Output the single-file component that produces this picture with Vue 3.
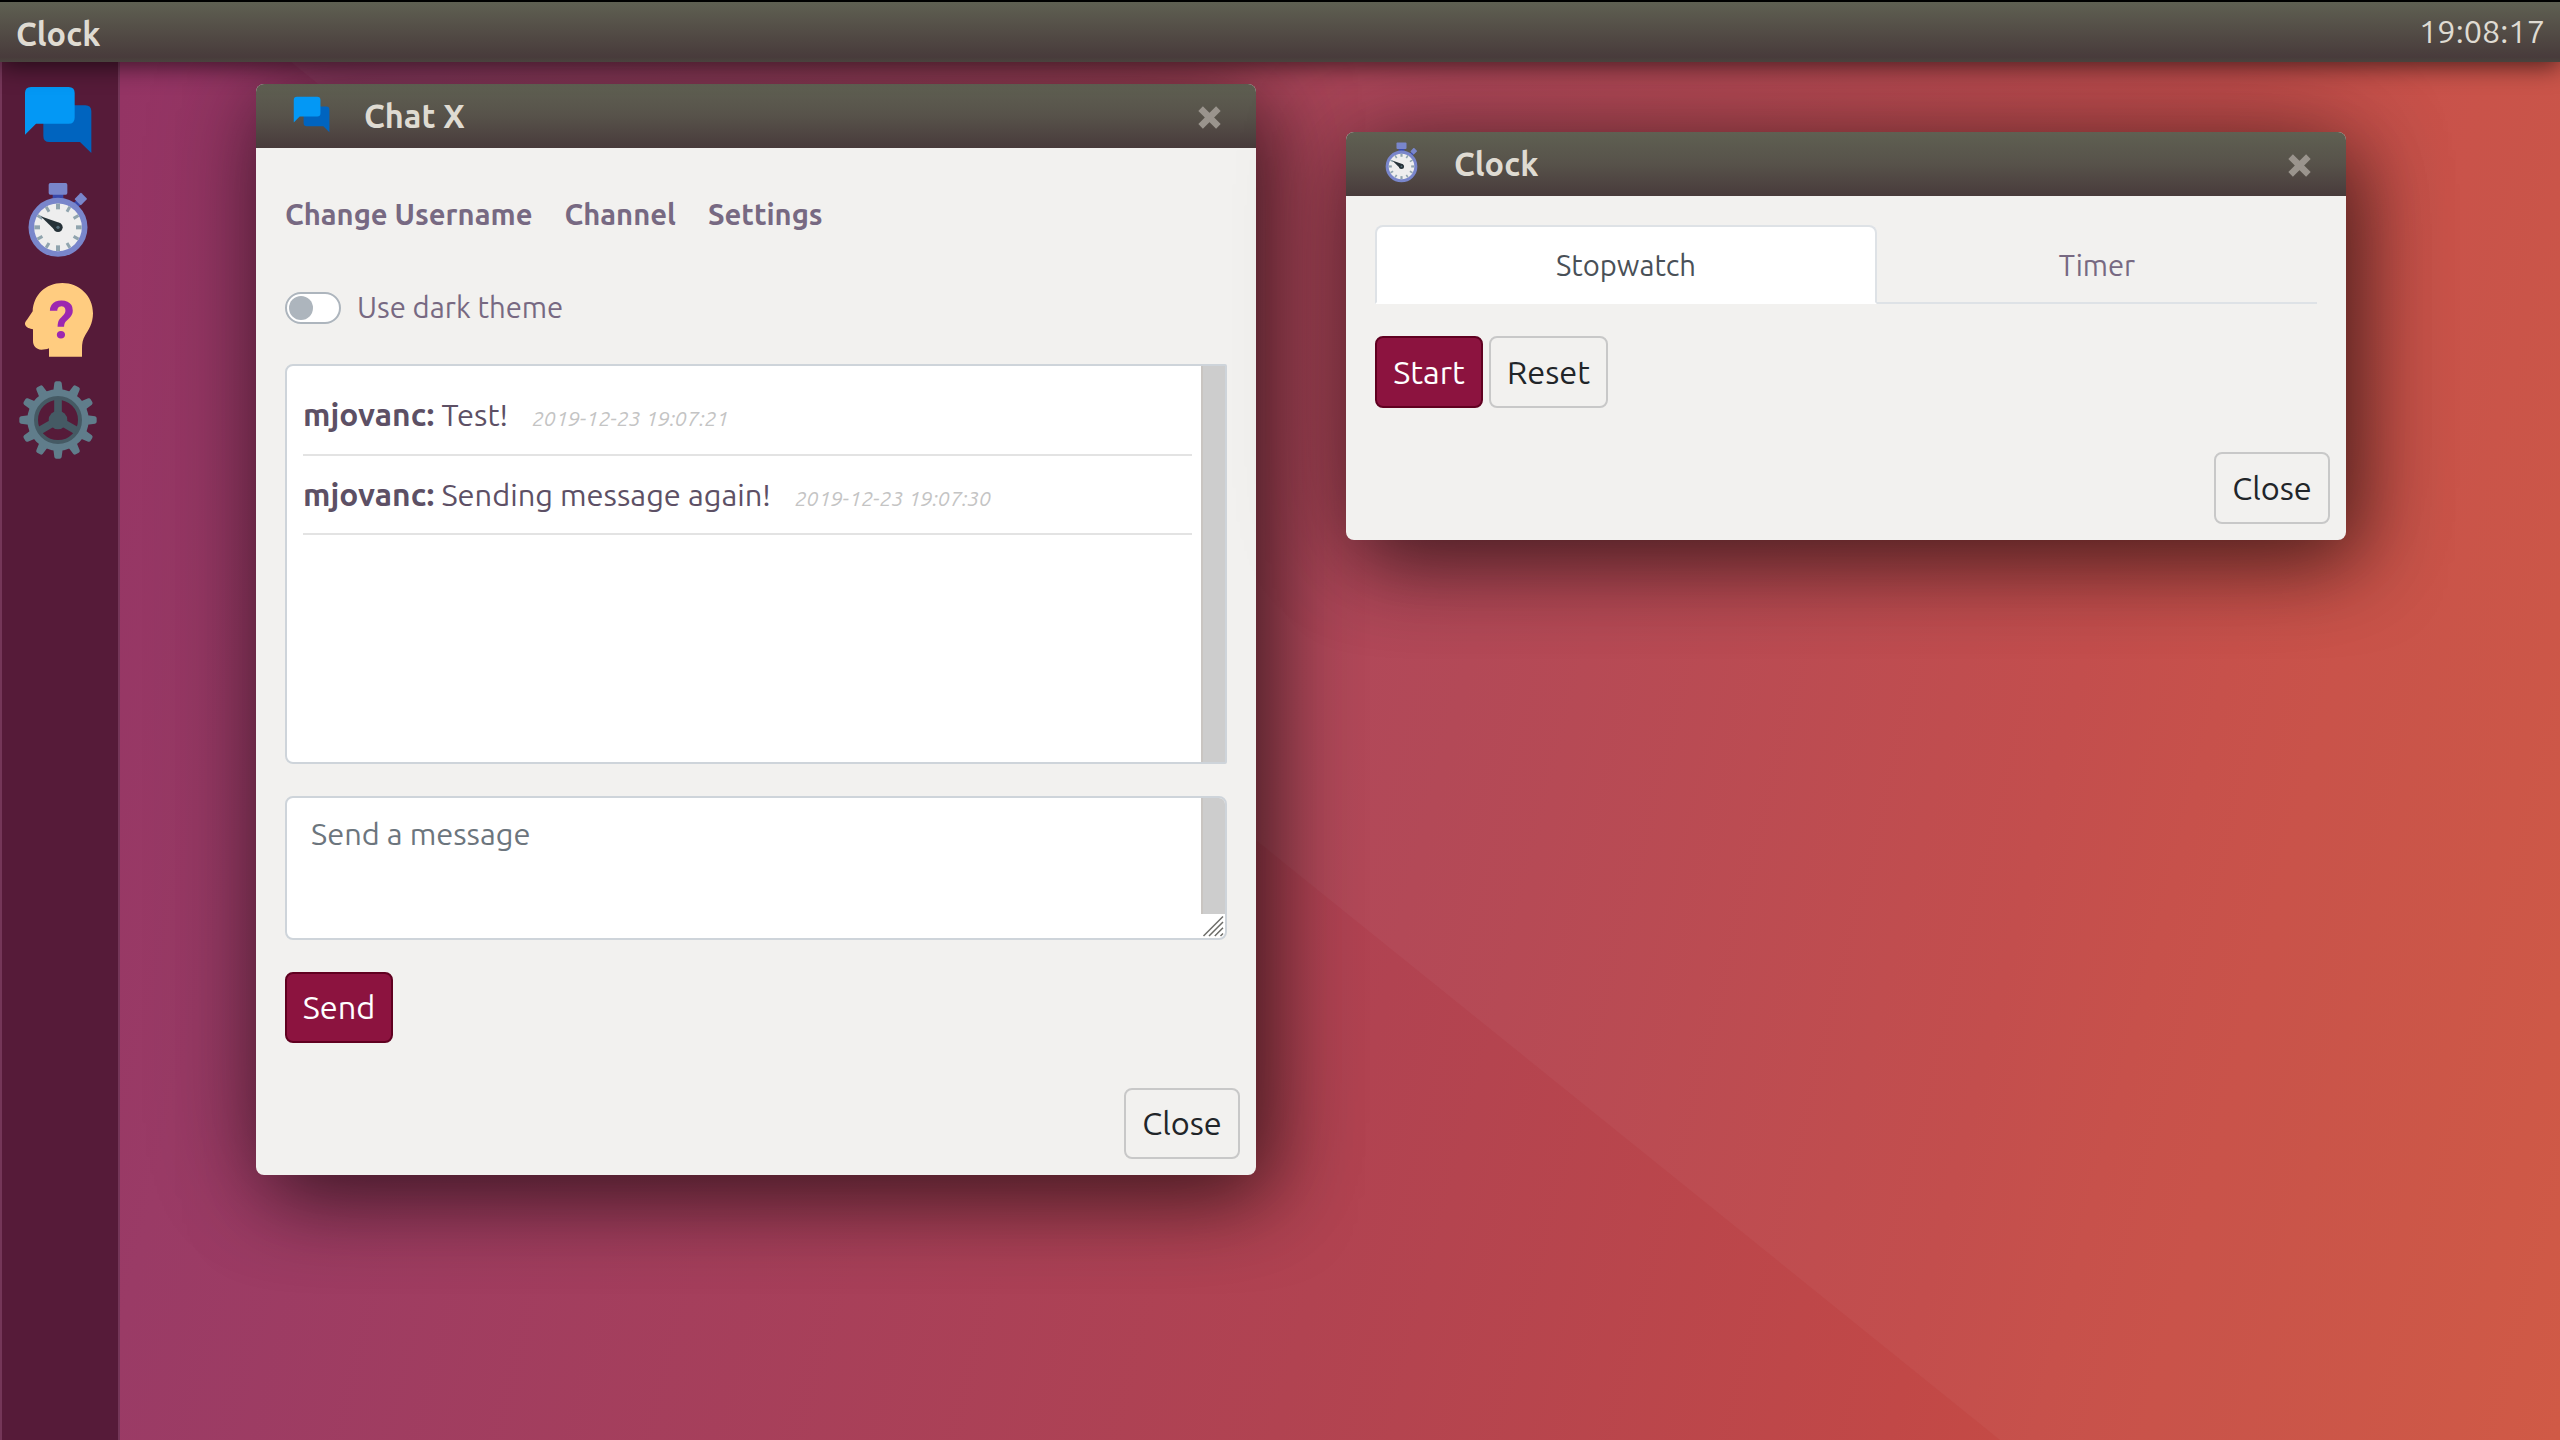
<script setup>
import { ref } from 'vue'

const activeApp = ref('Clock')
const time = ref('19:08:17')
const messages = [
  { user: 'mjovanc:', text: 'Test!', at: '2019-12-23 19:07:21' },
  { user: 'mjovanc:', text: 'Sending message again!', at: '2019-12-23 19:07:30' },
]
const twelfths = Array.from({ length: 12 }, (_, i) => i * 30)
</script>

<template>
  <div class="desktop">
    <!-- icon shapes shared by the dock and the title bars -->
    <svg class="defs" aria-hidden="true">
      <symbol id="chat" viewBox="54 240 240 240">
        <path fill="#0064bf" d="M148 316H256Q274 316 274 334V459L240 426H148Q130 426 130 408V334Q130 316 148 316Z" />
        <path fill="#0398f5" d="M93 261H206Q224 261 224 279V353Q224 371 206 371H108L75 404V279Q75 261 93 261Z" />
      </symbol>
      <symbol id="watch" viewBox="54 540 240 240">
        <rect x="158" y="580" width="32" height="20" fill="#3949ab" />
        <path d="M226 617L240 603" stroke="#3949ab" stroke-width="18" />
        <rect x="146" y="549" width="56" height="35" rx="5" fill="#7986cb" />
        <rect x="229" y="583" width="27" height="28" rx="3" transform="rotate(45 242.500 597)" fill="#7986cb" />
        <circle cx="174" cy="682" r="80" fill="#eeeeee" stroke="#7986cb" stroke-width="17" />
        <g fill="#90a4ae">
          <rect v-for="a in twelfths" :key="a" :x="a % 90 ? 169.5 : 168" y="611" :width="a % 90 ? 9 : 12" height="17" :transform="`rotate(${a} 174 682)`" />
        </g>
        <path d="M122 649L182 670L168 694Z" fill="#263238" />
        <circle cx="174" cy="682" r="14" fill="#263238" />
        <circle cx="174" cy="682" r="5" fill="#546e7a" />
      </symbol>
    </svg>

    <header class="topbar">
      <strong class="app-name">{{ activeApp }}</strong>
      <span class="time">{{ time }}</span>
    </header>

    <main class="workspace">
      <svg class="facet" viewBox="0 0 2560 1378" preserveAspectRatio="none">
        <path d="M291 0L2000 1378H2560V0Z" fill="#fff" fill-opacity=".035" />
      </svg>

      <aside class="dock">
        <svg class="dock-icon"><use href="#chat" /></svg>
        <svg class="dock-icon"><use href="#watch" /></svg>
        <svg class="dock-icon" viewBox="54 840 240 240">
          <path fill="#ffcc80" d="M187 849C238 849 279 888 279 940C279 972 264 992 256 1005C248 1019 246 1030 246 1046V1070H147V1045C140 1048 132 1049 124 1049C108 1047 99 1038 99 1022V988C90 986 78 984 75 973C74 968 78 963 82 958L98 934C100 885 137 849 187 849Z" />
          <text class="question" x="185" y="1015" text-anchor="middle">?</text>
        </svg>
        <svg class="dock-icon" viewBox="54 1140 240 240">
          <g fill="#607d8b">
            <path v-for="a in twelfths" :key="a" d="M154 1176L160 1172L163 1149Q164 1144 169 1144H179Q184 1144 185 1149L188 1172L194 1176Z" :transform="`rotate(${a} 174 1260)`" />
          </g>
          <circle cx="174" cy="1260" r="80" fill="none" stroke="#607d8b" stroke-width="24" />
          <g stroke="#455a64" fill="none">
            <circle cx="174" cy="1260" r="66" stroke-width="12" />
            <path v-for="a in [0, 120, 240]" :key="a" d="M174 1260V1196" stroke-width="23" :transform="`rotate(${a} 174 1260)`" />
          </g>
          <circle cx="174" cy="1260" r="28" fill="#455a64" />
        </svg>
      </aside>

      <section class="window chat">
        <div class="titlebar">
          <svg class="title-icon"><use href="#chat" /></svg>
          <h2>Chat X</h2>
          <svg class="dismiss" viewBox="0 0 22 22"><path d="M2.500 2.500L19.500 19.500M19.500 2.500L2.500 19.500" /></svg>
        </div>
        <div class="content">
          <nav class="links"><a>Change Username</a><a>Channel</a><a>Settings</a></nav>
          <label class="switch"><span class="track"><span class="knob"></span></span><span>Use dark theme</span></label>
          <div class="log">
            <div class="rows">
              <p v-for="m in messages" :key="m.at"><strong>{{ m.user }}</strong>&nbsp;<span class="body">{{ m.text }}</span><em>{{ m.at }}</em></p>
            </div>
            <div class="scroll"></div>
          </div>
          <div class="compose">
            <span class="placeholder">Send a message</span>
            <div class="side">
              <div class="scroll"></div>
              <svg class="grip" viewBox="0 0 24 24"><path d="M2.500 22L22 2.500M8 22L22 8M13.800 22L22 13.800M19.500 22L22 19.500" /></svg>
            </div>
          </div>
          <button class="btn primary send">Send</button>
        </div>
        <footer><button class="btn close">Close</button></footer>
      </section>

      <section class="window clock">
        <div class="titlebar">
          <svg class="title-icon"><use href="#watch" /></svg>
          <h2>Clock</h2>
          <svg class="dismiss" viewBox="0 0 22 22"><path d="M2.500 2.500L19.500 19.500M19.500 2.500L2.500 19.500" /></svg>
        </div>
        <div class="content">
          <div class="tabs"><a class="tab active">Stopwatch</a><a class="tab">Timer</a></div>
          <div class="actions"><button class="btn primary">Start</button><button class="btn reset">Reset</button></div>
        </div>
        <footer><button class="btn close">Close</button></footer>
      </section>
    </main>
  </div>
</template>

<style>
body { margin: 0; overflow: hidden; }
</style>

<style scoped>
.desktop {
  display: flex;
  flex-direction: column;
  width: 2560px;
  height: 1440px;
  overflow: hidden;
  box-sizing: border-box;
  font-family: Ubuntu, "Open Sans", "Noto Sans", sans-serif;
  background: linear-gradient(104deg, #943464 5%, #9a3b66 15.500%, #b14351 56%, #c14847 77%, #c54b45 82%, #cf5440 100%);
}
.desktop * { box-sizing: border-box; }
.defs { position: absolute; width: 0; height: 0; }
.question { font: 700 156px Roboto, sans-serif; fill: #9c27b0; }

.topbar {
  position: relative;
  z-index: 5;
  flex: none;
  display: flex;
  justify-content: space-between;
  height: 62px;
  padding: 0 15px 0 16px;
  border-top: 2px solid #000;
  background: linear-gradient(#5f6052, #483b3b 92%, #49433d);
  box-shadow: 0 4px 24px rgba(0, 0, 0, .62);
  color: #dfdbd2;
  font-size: 32.500px;
}
.app-name { line-height: 64px; }
.time { line-height: 58px; }

.workspace { position: relative; flex: 1; display: flex; }
.facet { position: absolute; inset: 0; width: 100%; height: 100%; }
.dock {
  position: relative;
  display: flex;
  flex-direction: column;
  align-items: center;
  gap: 20px;
  width: 120px;
  padding: 18px 4px 0 0;
  border-left: 2px solid #743658;
  border-right: 2px solid #743658;
  background: #561b39;
}
.dock-icon { width: 80px; height: 80px; flex: none; }

.window {
  position: absolute;
  display: flex;
  flex-direction: column;
  width: 1000px;
  border-radius: 8px;
  background: #f2f1ef;
  box-shadow: 0 0 110px rgba(0, 0, 0, .3), 14px 24px 80px rgba(0, 0, 0, .5);
}
.chat { left: 256px; top: 22px; height: 1091px; }
.clock { left: 1346px; top: 70px; height: 408px; }
.titlebar {
  display: flex;
  align-items: center;
  height: 64px;
  padding: 0 35px 0 34px;
  border-radius: 8px 8px 0 0;
  background: linear-gradient(#5f6052, #57524a 50%, #483b3b);
}
.title-icon { width: 43px; height: 43px; margin: 0 31px 4px 0; }
.titlebar h2 { margin: 0; padding-top: 1px; flex: 1; color: #dfdbd2; font-size: 32.500px; line-height: 65px; }
.dismiss { width: 23px; height: 23px; margin-top: 2px; fill: none; stroke: #9a948d; stroke-width: 6.200; }

.content { padding: 0 29px; color: #776982; }
.links { display: flex; gap: 32px; margin-top: 45px; height: 43px; line-height: 44px; font-size: 29.200px; font-weight: 700; }
.switch { display: flex; align-items: center; gap: 16px; height: 32px; margin-top: 56px; font-size: 29.300px; line-height: 30px; }
.track { display: flex; align-items: center; width: 56px; height: 32px; padding: 0 2px; border: 2px solid #adb5bd; border-radius: 16px; background: #fff; }
.knob { width: 24px; height: 24px; border-radius: 50%; background: #adb5bd; }

.log { display: flex; height: 400px; margin-top: 40px; border: 2px solid #ced4da; border-radius: 8px 2px 2px 8px; background: #fff; }
.rows { flex: 1; padding: 10px 9px 0 16px; }
.rows p { margin: 0; height: 80px; border-bottom: 2px solid #e3e3e3; color: #5d5065; font-size: 30.800px; line-height: 77px; white-space: nowrap; }
.rows p + p { height: 79px; }
.rows strong { font-size: 31.800px; }
.rows em { margin-left: 24px; color: #c4c4c4; font-size: 21.300px; }
.scroll { width: 24px; flex: 1; border-left: 2px solid #c9c5c1; background: #cdcdcd; }
.log .scroll { flex: none; }

.compose { display: flex; justify-content: space-between; height: 144px; margin-top: 32px; border: 2px solid #ced4da; border-radius: 8px; background: #fff; overflow: hidden; }
.placeholder { padding-left: 24px; color: #6c757d; font-size: 30.800px; line-height: 72px; }
.side { display: flex; flex-direction: column; width: 24px; }
.grip { width: 24px; height: 24px; fill: none; stroke: #6c6c68; stroke-width: 1.500; }

.btn { height: 72px; padding: 0; border: 2px solid #c8c8c8; border-radius: 8px; background: #f2f1ef; color: #212529; font: 400 32.500px/1 Ubuntu, "Open Sans", sans-serif; }
.primary { width: 108px; border-color: #600020; background: #8c133f; color: #fff; }
.send { display: block; height: 71px; margin-top: 32px; }
.reset { width: 119px; }
.close { width: 116px; }
.chat .close { height: 71px; }
.actions { display: flex; gap: 6px; margin-top: 32px; }
footer { display: flex; justify-content: flex-end; margin-top: auto; padding: 0 16px 16px 0; }

.tabs { display: flex; height: 79px; margin-top: 29px; font-size: 29.200px; text-align: center; }
.tab { flex: 1; line-height: 77px; padding-top: 2px; border-bottom: 2px solid #dee2e6; }
.tab.active { flex: 0 0 502px; padding-top: 0; border: 2px solid #dee2e6; border-bottom: 2px solid #fff; border-radius: 8px 8px 0 0; background: #fff; color: #495057; }
</style>
